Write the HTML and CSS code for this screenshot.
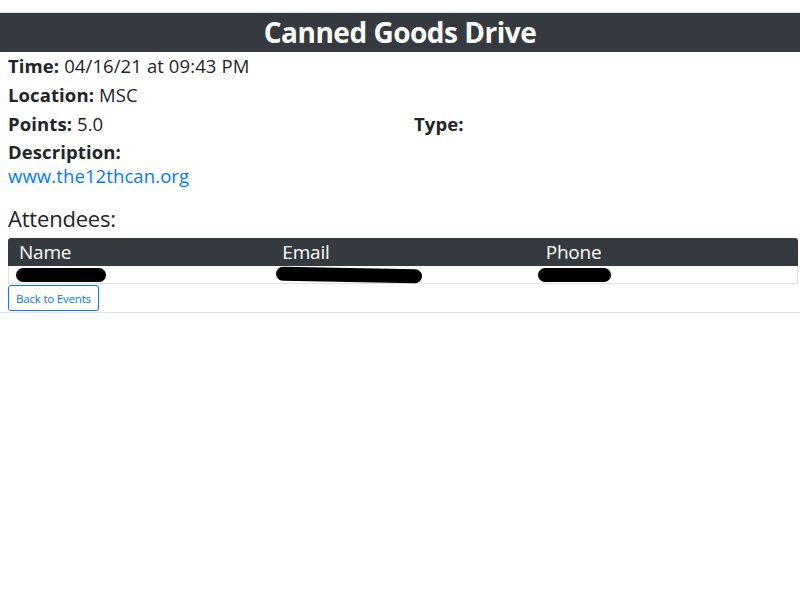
FILE: index.html
```html
<!DOCTYPE html>
<html>
<head>
<meta charset="utf-8">
<link rel="stylesheet" href="styles.css">
</head>
<body>
<div class="topline"></div>
<header class="banner"><h1 class="title">Canned Goods Drive</h1></header>
<main class="content">
  <div class="details">
    <p class="field"><b>Time:</b> 04/16/21 at 09:43 PM</p>
    <p class="field full"><b>Location:</b> MSC</p>
    <p class="field"><b>Points:</b> 5.0</p>
    <p class="field"><b>Type:</b></p>
    <div class="field full desc">
      <b>Description:</b>
      <a class="link" href="#">www.the12thcan.org</a>
    </div>
  </div>
  <h2 class="subtitle">Attendees:</h2>
  <table class="attendees">
    <thead>
      <tr><th>Name</th><th>Email</th><th>Phone</th></tr>
    </thead>
    <tbody>
      <tr>
        <td><span class="redact r1"></span></td>
        <td><span class="redact r2"></span></td>
        <td><span class="redact r3"></span></td>
      </tr>
    </tbody>
  </table>
  <button class="back">Back to Events</button>
</main>
<hr class="rule">
</body>
</html>
```
FILE: styles.css
```css
html, body {
  margin: 0;
  padding: 0;
  background: #fff;
  font-family: "Open Sans", "Noto Sans", sans-serif;
  color: #212529;
}
.topline {
  height: 12px;
  border-bottom: 1px solid #dee2e6;
}
.banner {
  background: #343a40;
  height: 39px;
  display: flex;
  align-items: center;
  justify-content: center;
}
.title {
  margin: 0;
  color: #fff;
  font-size: 28px;
  font-weight: 700;
  letter-spacing: -0.5px;
  line-height: 39px;
}
.content {
  padding: 0 2px 0 8px;
}
.details {
  display: grid;
  grid-template-columns: 406px 1fr;
  margin-top: -1px;
}
.field {
  margin: 0;
  font-size: 18.5px;
  line-height: 29px;
  letter-spacing: 0.1px;
}
.field b {
  font-weight: 700;
}
.full {
  grid-column: 1 / 3;
}
.desc {
  display: flex;
  flex-direction: column;
  line-height: 24px;
  padding-top: 2px;
}
.link {
  color: #007bff;
  text-decoration: none;
  font-size: 18.5px;
}
.subtitle {
  margin: 15px 0 0;
  font-size: 22px;
  font-weight: 400;
  line-height: 30px;
  letter-spacing: -0.2px;
}
.attendees {
  width: 790px;
  border-collapse: separate;
  border-spacing: 0;
  table-layout: fixed;
  margin-top: 5px;
}
.attendees th {
  background: #343a40;
  color: #fff;
  font-weight: 400;
  font-size: 19px;
  text-align: left;
  padding: 0 11px;
  height: 28px;
  line-height: 28px;
  letter-spacing: -0.2px;
}
.attendees th:first-child { border-top-left-radius: 3px; }
.attendees th:last-child { border-top-right-radius: 3px; }
.attendees td {
  height: 17px;
  padding: 0 11px;
  border-bottom: 1px solid #dee2e6;
  vertical-align: middle;
}
.attendees td:first-child { border-left: 1px solid #dee2e6; padding-left: 10px; }
.attendees td:last-child { border-right: 1px solid #dee2e6; }
.redact {
  display: block;
  height: 14px;
  background: #000;
  border-radius: 8px;
}
.r1 { width: 90px; margin-left: -3px; }
.r2 { width: 146px; margin-left: -6px; transform: rotate(1deg); }
.r3 { width: 73px; margin-left: -8px; }
.back {
  display: block;
  margin-top: 1px;
  margin-bottom: 1px;
  width: 91px;
  height: 26px;
  padding: 0;
  background: #fff;
  border: 1px solid #007bff;
  border-radius: 3px;
  color: #007bff;
  font-family: "Open Sans", "Noto Sans", sans-serif;
  font-size: 11.5px;
  letter-spacing: -0.2px;
}
.rule {
  margin: 0;
  border: 0;
  border-top: 1px solid #dee2e6;
}
```
